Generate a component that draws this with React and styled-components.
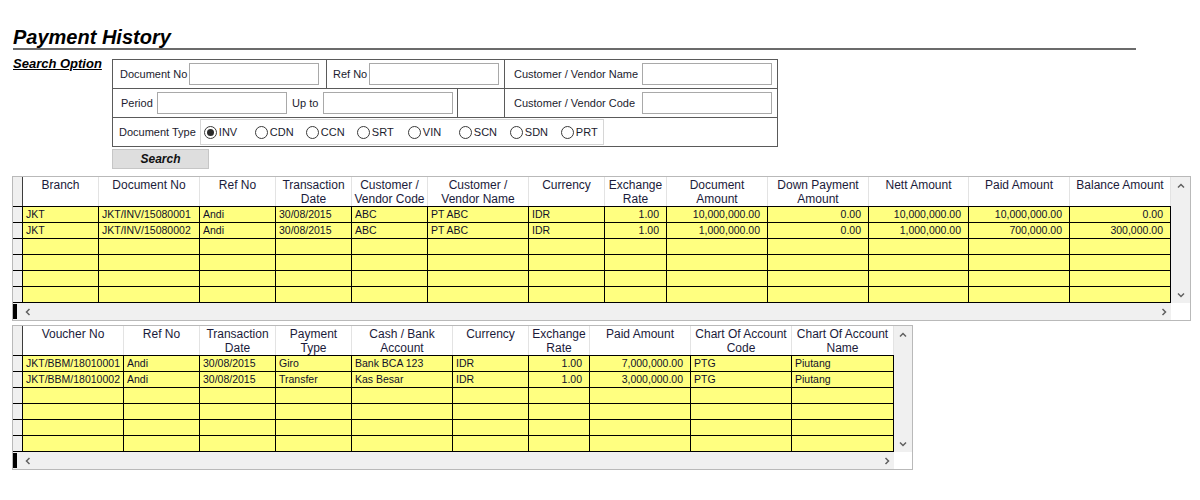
import styled, { createGlobalStyle } from "styled-components";

const GlobalStyle = createGlobalStyle`
  body {
    margin: 0;
    background: #fff;
    font-family: "Liberation Sans", Arial, sans-serif;
    color: #1b1b2e;
  }
`;

const Page = styled.div`
  width: 1200px;
  height: 500px;
  box-sizing: border-box;
  padding: 26px 0 0 12px;
`;

const Title = styled.h1`
  margin: 0 0 0 1px;
  width: 1123px;
  font-size: 20px;
  line-height: 22px;
  font-weight: bold;
  font-style: italic;
  color: #000;
  border-bottom: 2px solid #6b6b6b;
`;

const SearchSection = styled.div`
  display: flex;
  margin-top: 9px;
`;

const SearchLabel = styled.div`
  width: 99px;
  margin: -3px 0 0 1px;
  font-size: 13px;
  line-height: 15px;
  font-weight: bold;
  font-style: italic;
  text-decoration: underline;
  color: #000;
`;

const SearchBody = styled.div`
  display: flex;
  flex-direction: column;
`;

const Form = styled.div`
  width: 666px;
  box-sizing: border-box;
  border: 1px solid #5a5a5a;
`;

const FormRow = styled.div`
  display: flex;
  height: 29px;
  box-sizing: border-box;
  border-bottom: 1px solid #5a5a5a;
  &:last-child {
    height: 28px;
    border-bottom: none;
  }
`;

const Cell = styled.div`
  display: flex;
  align-items: center;
  justify-content: ${(p) => (p.$start ? "flex-start" : "space-between")};
  gap: ${(p) => (p.$gap ? p.$gap : 0)}px;
  box-sizing: border-box;
  width: ${(p) => (p.$w ? p.$w + "px" : "auto")};
  flex: ${(p) => (p.$w ? "none" : 1)};
  padding: ${(p) => p.$pad || "0"};
  border-right: 1px solid #5a5a5a;
  font-size: 11px;
  &:last-child {
    border-right: none;
  }
`;

const Label = styled.span`
  white-space: nowrap;
`;

const TextBox = styled.input`
  width: 130px;
  height: 22px;
  box-sizing: border-box;
  border: 1px solid #a9a9a9;
  background: #fff;
  padding: 0 3px;
  font-family: inherit;
  font-size: 11px;
  outline: none;
`;

const RadioBox = styled.div`
  display: flex;
  align-items: center;
  width: 404px;
  height: 26px;
  box-sizing: border-box;
  border: 1px solid #d6d6d6;
  padding-left: 3px;
`;

const RadioItem = styled.label`
  display: flex;
  align-items: center;
  width: 51px;
  flex: none;
  font-size: 11px;
`;

const Circle = styled.span`
  width: 13px;
  height: 13px;
  box-sizing: border-box;
  border: 1px solid #3a3a3a;
  border-radius: 50%;
  background: #fff;
  display: flex;
  align-items: center;
  justify-content: center;
  margin-right: 2px;
  &::after {
    content: "";
    width: 7px;
    height: 7px;
    border-radius: 50%;
    background: ${(p) => (p.$on ? "#2b2b2b" : "transparent")};
  }
`;

const SearchButton = styled.button`
  margin-top: 2px;
  width: 97px;
  height: 20px;
  padding: 0;
  background: #dedede;
  border: 1px solid #c6c6c6;
  font-family: inherit;
  font-size: 12px;
  font-weight: bold;
  font-style: italic;
  color: #111;
`;

const GridFrame = styled.div`
  width: max-content;
  margin-top: ${(p) => p.$top}px;
  border: 1px solid #b9b9b9;
`;

const GridTop = styled.div`
  display: flex;
`;

const GridMain = styled.div`
  display: flex;
  flex-direction: column;
`;

const HeadRow = styled.div`
  display: flex;
  height: 29px;
`;

const RowHead = styled.div`
  width: 10px;
  flex: none;
  box-sizing: border-box;
  background: #f0f0f0;
  border-right: 1px solid ${(p) => (p.$head ? "#3c3c3c" : "#000")};
`;

const HeadCell = styled.div`
  width: ${(p) => p.$w}px;
  flex: none;
  box-sizing: border-box;
  border-right: 1px solid #e3e3e3;
  padding-top: 1px;
  text-align: center;
  font-size: 12px;
  line-height: 14px;
  white-space: pre;
  color: #1b1b3a;
  background: #fff;
`;

const Rows = styled.div`
  border-bottom: 1px solid #000;
`;

const DataRow = styled.div`
  display: flex;
  height: 16px;
  box-sizing: border-box;
  border-top: 1px solid #000;
`;

const DataCell = styled.div`
  width: ${(p) => p.$w}px;
  flex: none;
  box-sizing: border-box;
  border-right: 1px solid #000;
  background: #ffff80;
  padding: ${(p) => (p.$right ? "0 7px 0 0" : "0 0 0 3px")};
  text-align: ${(p) => (p.$right ? "right" : "left")};
  font-size: 10.5px;
  line-height: 15px;
  white-space: nowrap;
  overflow: hidden;
  color: #10102a;
`;

const VScroll = styled.div`
  width: ${(p) => p.$w}px;
  flex: none;
  background: #f0f0f0;
  display: flex;
  flex-direction: column;
  justify-content: space-between;
  align-items: center;
  padding: 5px 0 4px;
  box-sizing: border-box;
`;

const HScrollRow = styled.div`
  display: flex;
  height: 17px;
`;

const HScroll = styled.div`
  flex: 1;
  display: flex;
  align-items: center;
  background: #f0f0f0;
`;

const ScrollMark = styled.span`
  width: 4px;
  height: 15px;
  background: #000;
  margin-right: 7px;
`;

const RightArrow = styled.span`
  margin-left: auto;
  margin-right: 3px;
  display: flex;
`;

const Corner = styled.div`
  width: ${(p) => p.$w}px;
  background: #fff;
`;

const Chevron = ({ dir }) => {
  const pts = {
    up: "1,5.5 4,2.5 7,5.5",
    down: "1,2.5 4,5.5 7,2.5",
    left: "5.5,1 2.5,4 5.5,7",
    right: "2.5,1 5.5,4 2.5,7",
  }[dir];
  return (
    <svg width="8" height="8" viewBox="0 0 8 8">
      <polyline points={pts} fill="none" stroke="#606060" strokeWidth="1.5" />
    </svg>
  );
};

function DataGrid({ columns, rows, scrollW, top }) {
  const blanks = 6 - rows.length;
  const all = [...rows, ...Array.from({ length: blanks }, () => columns.map(() => ""))];
  return (
    <GridFrame $top={top}>
      <GridTop>
        <GridMain>
          <HeadRow>
            <RowHead $head />
            {columns.map((c) => (
              <HeadCell key={c.title} $w={c.w}>
                {c.title}
              </HeadCell>
            ))}
          </HeadRow>
          <Rows>
            {all.map((r, i) => (
              <DataRow key={i}>
                <RowHead />
                {columns.map((c, j) => (
                  <DataCell key={j} $w={c.w} $right={c.right}>
                    {r[j]}
                  </DataCell>
                ))}
              </DataRow>
            ))}
          </Rows>
        </GridMain>
        <VScroll $w={scrollW}>
          <Chevron dir="up" />
          <Chevron dir="down" />
        </VScroll>
      </GridTop>
      <HScrollRow>
        <HScroll>
          <ScrollMark />
          <Chevron dir="left" />
          <RightArrow>
            <Chevron dir="right" />
          </RightArrow>
        </HScroll>
        <Corner $w={scrollW} />
      </HScrollRow>
    </GridFrame>
  );
}

const invoiceCols = [
  { title: "Branch", w: 76 },
  { title: "Document No", w: 101 },
  { title: "Ref No", w: 76 },
  { title: "Transaction\nDate", w: 76 },
  { title: "Customer /\nVendor Code", w: 76 },
  { title: "Customer /\nVendor Name", w: 101 },
  { title: "Currency", w: 76 },
  { title: "Exchange\nRate", w: 62, right: true },
  { title: "Document\nAmount", w: 101, right: true },
  { title: "Down Payment\nAmount", w: 101, right: true },
  { title: "Nett Amount", w: 100, right: true },
  { title: "Paid Amount", w: 101, right: true },
  { title: "Balance Amount", w: 101, right: true },
];

const invoiceRows = [
  ["JKT", "JKT/INV/15080001", "Andi", "30/08/2015", "ABC", "PT ABC", "IDR", "1.00", "10,000,000.00", "0.00", "10,000,000.00", "10,000,000.00", "0.00"],
  ["JKT", "JKT/INV/15080002", "Andi", "30/08/2015", "ABC", "PT ABC", "IDR", "1.00", "1,000,000.00", "0.00", "1,000,000.00", "700,000.00", "300,000.00"],
];

const voucherCols = [
  { title: "Voucher No", w: 101 },
  { title: "Ref No", w: 76 },
  { title: "Transaction\nDate", w: 76 },
  { title: "Payment\nType", w: 76 },
  { title: "Cash / Bank\nAccount", w: 101 },
  { title: "Currency", w: 76 },
  { title: "Exchange\nRate", w: 61, right: true },
  { title: "Paid Amount", w: 101, right: true },
  { title: "Chart Of Account\nCode", w: 101 },
  { title: "Chart Of Account\nName", w: 102 },
];

const voucherRows = [
  ["JKT/BBM/18010001", "Andi", "30/08/2015", "Giro", "Bank BCA 123", "IDR", "1.00", "7,000,000.00", "PTG", "Piutang"],
  ["JKT/BBM/18010002", "Andi", "30/08/2015", "Transfer", "Kas Besar", "IDR", "1.00", "3,000,000.00", "PTG", "Piutang"],
];

const docTypes = ["INV", "CDN", "CCN", "SRT", "VIN", "SCN", "SDN", "PRT"];

export default function App() {
  return (
    <Page>
      <GlobalStyle />
      <Title>Payment History</Title>
      <SearchSection>
        <SearchLabel>Search Option</SearchLabel>
        <SearchBody>
          <Form>
            <FormRow>
              <Cell $w={214} $pad="0 7px 0 7px">
                <Label>Document No</Label>
                <TextBox />
              </Cell>
              <Cell $w={178} $pad="0 5px 0 6px">
                <Label>Ref No</Label>
                <TextBox />
              </Cell>
              <Cell $pad="0 5px 0 9px">
                <Label>Customer / Vendor Name</Label>
                <TextBox />
              </Cell>
            </FormRow>
            <FormRow>
              <Cell $w={345} $pad="0 4px 0 8px">
                <Label>Period</Label>
                <TextBox />
                <Label>Up to</Label>
                <TextBox />
              </Cell>
              <Cell $w={47} />
              <Cell $pad="0 5px 0 9px">
                <Label>Customer / Vendor Code</Label>
                <TextBox />
              </Cell>
            </FormRow>
            <FormRow>
              <Cell $pad="0 0 0 6px" $gap={4} $start>
                <Label>Document Type</Label>
                <RadioBox>
                  {docTypes.map((t, i) => (
                    <RadioItem key={t}>
                      <Circle $on={i === 0} />
                      {t}
                    </RadioItem>
                  ))}
                </RadioBox>
              </Cell>
            </FormRow>
          </Form>
          <SearchButton>Search</SearchButton>
        </SearchBody>
      </SearchSection>
      <DataGrid columns={invoiceCols} rows={invoiceRows} scrollW={19} top={7} />
      <DataGrid columns={voucherCols} rows={voucherRows} scrollW={18} top={4} />
    </Page>
  );
}
